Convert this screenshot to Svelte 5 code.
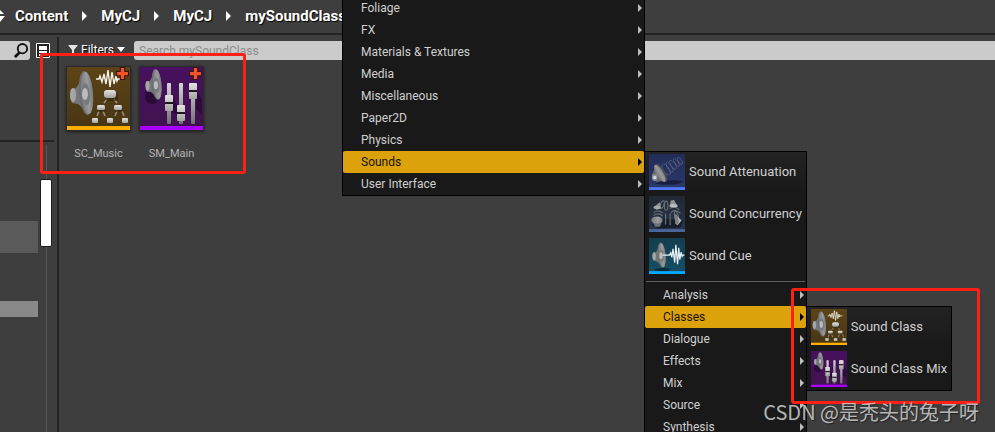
<script>
	const crumbs = ['Content', 'MyCJ', 'MyCJ', 'mySoundClass'];

	const assets = [
		{ name: 'SC_Music', icon: 'class' },
		{ name: 'SM_Main', icon: 'mix' }
	];

	const categories = [
		'Foliage',
		'FX',
		'Materials & Textures',
		'Media',
		'Miscellaneous',
		'Paper2D',
		'Physics',
		'Sounds',
		'User Interface'
	];

	const soundAssets = [
		{ name: 'Sound Attenuation', icon: 'attenuation' },
		{ name: 'Sound Concurrency', icon: 'concurrency' },
		{ name: 'Sound Cue', icon: 'cue' }
	];

	const soundGroups = ['Analysis', 'Classes', 'Dialogue', 'Effects', 'Mix', 'Source', 'Synthesis'];

	const classAssets = [
		{ name: 'Sound Class', icon: 'class' },
		{ name: 'Sound Class Mix', icon: 'mix' }
	];

	let openCategory = $state('Sounds');
	let openGroup = $state('Classes');
	let query = $state('');
</script>

{#snippet arrow()}
	<svg class="arrow" viewBox="0 0 5 10" aria-hidden="true"><path d="M0 0 5 5 0 10z" /></svg>
{/snippet}

{#snippet speaker()}
	<path d="M3 18 8 17 17 3 20 42 10 33 4 32Q1 25 3 18z" fill="#74767a" />
	<ellipse cx="5" cy="24" rx="3" ry="7" fill="#a4a6a9" />
	<ellipse cx="18" cy="22" rx="7" ry="22" fill="#6c6e71" transform="rotate(-5 18 22)" />
	<ellipse cx="19" cy="22" rx="6" ry="21" fill="url(#metal)" transform="rotate(-5 19 22)" />
	<ellipse cx="18" cy="23" rx="4" ry="11" fill="#77797c" transform="rotate(-5 18 23)" />
	<ellipse cx="17" cy="23" rx="3" ry="6" fill="#b9bbbd" />
{/snippet}

{#snippet assetIcon(kind)}
	<svg class="asset-icon" viewBox="0 0 63 63" aria-hidden="true">
		{#if kind === 'class'}
			<rect width="63" height="63" fill="url(#gold)" />
			<g transform="translate(1 4)">{@render speaker()}</g>
			<path
				d="M29 12h3l1-3 2 6 2-8 2 10 2-14 2 17 2-15 2 12 2-8 1 5 1-2h4"
				fill="none"
				stroke="#f4f1e8"
				stroke-width="1.4"
			/>
			<path
				d="m40 32-3 4m10-4 3 4M32 44l-2 5m6-5 2 5m12-5-2 5m7-5 2 5"
				stroke="#9b917c"
				stroke-width="1.5"
			/>
			<g fill="#30250e" opacity=".6">
				<rect x="38" y="26" width="13" height="8" rx="3" />
				<rect x="30" y="40" width="9" height="5" rx="2" />
				<rect x="47" y="40" width="9" height="5" rx="2" />
			</g>
			<g fill="url(#knob)">
				<rect x="37" y="23" width="12" height="8" rx="3" />
				<rect x="30" y="38" width="8" height="5" rx="1.5" />
				<rect x="47" y="38" width="8" height="5" rx="1.5" />
				<rect x="25" y="51" width="6" height="5" rx="1" />
				<rect x="40" y="51" width="6" height="5" rx="1" />
				<rect x="55" y="51" width="6" height="5" rx="1" />
			</g>
			<rect y="59" width="63" height="4" fill="#ffae00" />
		{:else if kind === 'mix'}
			<rect width="63" height="63" fill="url(#violet)" />
			<ellipse cx="12" cy="29" rx="7" ry="8" fill="#20082c" opacity=".7" />
			<g transform="translate(4 2) scale(.7)">{@render speaker()}</g>
			<path d="m33 31 4 7v10l-5-3zM57 24l5 9v15l-6-6z" fill="#20082c" opacity=".6" />
			<g fill="url(#rail)">
				<rect x="27" y="16" width="4" height="41" rx="1" />
				<rect x="39" y="16" width="4" height="41" rx="1" />
				<rect x="51" y="16" width="4" height="41" rx="1" />
			</g>
			{#each [[25, 28], [37, 38], [49, 16]] as [x, y]}
				<rect {x} {y} width="8" height="16" rx="1" fill="url(#knob)" />
				<rect {x} y={y + 7} width="8" height="2" fill="#20171f" />
			{/each}
			<rect y="59" width="63" height="4" fill="#aa00ff" />
		{:else if kind === 'attenuation'}
			<rect width="63" height="63" fill="url(#navy)" />
			<path d="M10 52Q34 42 61 48 45 57 10 52z" fill="#11162e" opacity=".7" />
			<g fill="none" stroke="#78809d" stroke-width="1" stroke-dasharray="3 1">
				<ellipse cx="30" cy="27" rx="5" ry="11" transform="rotate(-32 30 27)" />
				<ellipse cx="36" cy="23" rx="4" ry="10" transform="rotate(-32 36 23)" />
				<ellipse cx="42" cy="19" rx="4" ry="9" transform="rotate(-32 42 19)" />
				<ellipse cx="48" cy="15" rx="3" ry="8" transform="rotate(-32 48 15)" />
				<ellipse cx="54" cy="12" rx="3" ry="7" transform="rotate(-32 54 12)" />
			</g>
			<path d="m5 37 8-19 18 27-18 4z" fill="#66686d" />
			<ellipse cx="21" cy="33" rx="7" ry="18" fill="#4c4e53" transform="rotate(-31 21 33)" />
			<ellipse cx="19" cy="34" rx="6" ry="17" fill="url(#metal)" transform="rotate(-31 19 34)" />
			<ellipse cx="10" cy="41" rx="5" ry="6" fill="#8f9092" />
			<circle cx="10" cy="41" r="3" fill="#d7d7d6" />
			<rect y="58" width="63" height="5" fill="#4f78f4" />
		{:else if kind === 'concurrency'}
			<rect width="63" height="63" fill="url(#slate)" />
			<path d="M5 50 24 39 60 43 55 55 15 57z" fill="#11151d" opacity=".7" />
			<g fill="none" stroke="#687078" stroke-width="2">
				<ellipse cx="23" cy="15" rx="3" ry="7" transform="rotate(20 23 15)" />
				<ellipse cx="30" cy="17" rx="3" ry="8" />
				<path d="M8 29q9-6 16 1M8 34q9-6 16 1M36 22q9-6 17 2M38 29q8-7 17 1M29 31v19m8-20v21" />
				<ellipse cx="48" cy="35" rx="3" ry="8" transform="rotate(-12 48 35)" />
			</g>
			<path d="m10 18 9-7 2 11-8 2zM38 8l6-1 6 12H36z" fill="#8f9496" />
			<ellipse cx="14" cy="20" rx="6" ry="3" fill="#a5a9aa" />
			<ellipse cx="43" cy="17" rx="7" ry="3" fill="#babdbd" />
			<path d="m5 43 19-1-5 12H11z" fill="#6d7275" />
			<ellipse cx="14" cy="42" rx="10" ry="6" fill="url(#metal)" />
			<path d="m46 32 11 11-7 8-4-3z" fill="#b0b3b3" />
			<ellipse cx="48" cy="41" rx="3" ry="9" fill="#797e81" transform="rotate(-12 48 41)" />
			<rect y="58" width="63" height="5" fill="#49669a" />
		{:else}
			<rect width="63" height="63" fill="url(#teal)" />
			<path d="M8 55Q25 50 39 55 24 62 8 55z" fill="#071f28" opacity=".7" />
			<g transform="translate(4 8)">{@render speaker()}</g>
			<path
				d="M24 30h12l2-4 2 8 2-15 3 24 2-31 3 34 2-29 2 21 2-13 2 7 1-2h3"
				fill="none"
				stroke="#e5f2f4"
				stroke-width="2.2"
			/>
			<rect y="58" width="63" height="5" fill="#00a8ff" />
		{/if}
	</svg>
{/snippet}

<svg class="defs" aria-hidden="true">
	<defs>
		<linearGradient id="metal" x2="1">
			<stop offset="0" stop-color="#77797c" />
			<stop offset=".6" stop-color="#999b9d" />
			<stop offset="1" stop-color="#77787a" />
		</linearGradient>
		<linearGradient id="knob" x2="0" y2="1">
			<stop offset="0" stop-color="#e4e4e2" />
			<stop offset="1" stop-color="#a2a2a1" />
		</linearGradient>
		<linearGradient id="rail" x2="0" y2="1">
			<stop offset="0" stop-color="#d6d6d6" />
			<stop offset="1" stop-color="#727074" />
		</linearGradient>
		<linearGradient id="gold" x2="0" y2="1">
			<stop offset="0" stop-color="#5d4417" />
			<stop offset="1" stop-color="#473514" />
		</linearGradient>
		<linearGradient id="violet" x2="0" y2="1">
			<stop offset="0" stop-color="#48105f" />
			<stop offset="1" stop-color="#40124f" />
		</linearGradient>
		<linearGradient id="navy" x2="0" y2="1">
			<stop offset="0" stop-color="#222c57" />
			<stop offset="1" stop-color="#2a396c" />
		</linearGradient>
		<linearGradient id="slate" x2="0" y2="1">
			<stop offset="0" stop-color="#222833" />
			<stop offset="1" stop-color="#29364d" />
		</linearGradient>
		<linearGradient id="teal" x2="0" y2="1">
			<stop offset="0" stop-color="#143d4d" />
			<stop offset="1" stop-color="#155068" />
		</linearGradient>
	</defs>
</svg>

<main class="browser">
	<nav class="crumbs" aria-label="Path">
		<svg class="history" viewBox="0 0 5 12" aria-hidden="true">
			<path d="M0 0 4 4H0zM0 6h5L0 12z" fill="#fff" />
		</svg>
		{#each crumbs as crumb, i}
			{#if i > 0}{@render arrow()}{/if}
			<a href="#path-{i}">{crumb}</a>
		{/each}
	</nav>

	<div class="panels">
		<aside class="sources">
			<div class="source-bar">
				<button class="find" aria-label="Search folders">
					<svg viewBox="0 0 16 16" aria-hidden="true">
						<circle cx="9" cy="6" r="5" fill="none" stroke="#111" stroke-width="2" />
						<path d="M6 10 1 15" stroke="#111" stroke-width="3" />
					</svg>
				</button>
				<button class="collections" aria-label="Show collections">
					<svg viewBox="0 0 14 15" aria-hidden="true">
						<path d="M.5.5h13v14H.5z" fill="#222" stroke="#fff" />
						<path d="M3 3h8v4H3zM3 8h8v2H3zM3 11h8v2H3z" fill="#fff" />
					</svg>
				</button>
			</div>
			<div class="tree">
				<div class="rows">
					<div class="row hovered"></div>
					<div class="row selected"></div>
				</div>
				<div class="track"><div class="thumb"></div></div>
			</div>
		</aside>

		<section class="content">
			<div class="toolbar">
				<button class="filters">
					<svg viewBox="0 0 10 10" aria-hidden="true"><path d="M0 0h10L6 5v5L4 8V5z" /></svg>
					<span>Filters</span>
					<svg class="caret" viewBox="0 0 8 5" aria-hidden="true"><path d="M0 0h8L4 5z" /></svg>
				</button>
				<input
					type="text"
					aria-label="Search assets"
					placeholder="Search mySoundClass"
					bind:value={query}
				/>
			</div>
			<div class="assets">
				{#each assets as asset}
					<button class="tile">
						<span class="thumbnail">
							{@render assetIcon(asset.icon)}
							<svg class="dirty" viewBox="0 0 12 12" aria-hidden="true">
								<path d="M4 .5h4V4h3.500v4H8v3.500H4V8H.5V4H4z" fill="#f3542b" stroke="#41150c" />
							</svg>
						</span>
						<span>{asset.name}</span>
					</button>
				{/each}
			</div>
		</section>
	</div>

	<ul class="menu main-menu">
		{#each categories as category}
			<li>
				<button
					class="item"
					class:open={category === openCategory}
					onclick={() => (openCategory = category)}
				>
					{category}
					{@render arrow()}
				</button>
				{#if category === 'Sounds' && openCategory === 'Sounds'}
					<ul class="menu submenu">
						{#each soundAssets as asset}
							<li><button class="asset">{@render assetIcon(asset.icon)}{asset.name}</button></li>
						{/each}
						<li class="divider" role="separator"></li>
						{#each soundGroups as group}
							<li>
								<button
									class="item"
									class:open={group === openGroup}
									onclick={() => (openGroup = group)}
								>
									{group}
									{@render arrow()}
								</button>
								{#if group === 'Classes' && openGroup === 'Classes'}
									<ul class="menu submenu">
										{#each classAssets as asset}
											<li>
												<button class="asset">{@render assetIcon(asset.icon)}{asset.name}</button>
											</li>
										{/each}
									</ul>
								{/if}
							</li>
						{/each}
					</ul>
				{/if}
			</li>
		{/each}
	</ul>

	<div class="mark mark-assets"></div>
	<div class="mark mark-classes"></div>
	<div class="watermark">CSDN @是秃头的兔子呀</div>
</main>

<style>
	:global(body) {
		background: #3e3e3e;
	}

	.browser {
		position: relative;
		display: flex;
		flex-direction: column;
		height: 100vh;
		overflow: hidden;
		background: #3e3e3e;
		color: #d0d0d0;
		font-family: Roboto, 'Noto Sans', sans-serif;
		font-size: 13px;
	}

	.browser * {
		box-sizing: border-box;
	}

	.defs {
		position: absolute;
		width: 0;
		height: 0;
	}

	button {
		display: flex;
		align-items: center;
		padding: 0;
		border: 0;
		background: none;
		color: inherit;
		font: inherit;
		text-align: left;
	}

	svg {
		display: block;
		flex: none;
	}

	.arrow {
		width: 5px;
		height: 10px;
		fill: currentColor;
	}

	.crumbs {
		display: flex;
		align-items: center;
		flex: none;
		height: 35px;
		padding-bottom: 2px;
		border-bottom: 2px solid #232323;
		color: #fff;
		font-size: 15px;
		font-weight: 700;
		text-shadow: 1px 1px 1px #000;
	}

	.crumbs a {
		color: inherit;
		text-decoration: none;
	}

	.crumbs .arrow {
		margin: 0 14px;
	}

	.history {
		width: 5px;
		height: 12px;
		margin-right: 10px;
	}

	.panels {
		display: flex;
		flex: 1;
		min-height: 0;
		padding-top: 2px;
	}

	.sources {
		display: flex;
		flex-direction: column;
		width: 59px;
		border-right: 2px solid #232323;
	}

	.source-bar {
		display: flex;
		align-items: flex-start;
		gap: 6px;
		height: 105px;
		margin-right: 3px;
		padding-top: 4px;
		border-bottom: 2px solid #232323;
	}

	.find {
		justify-content: flex-end;
		width: 30px;
		height: 19px;
		padding-right: 1px;
		border-radius: 0 3px 3px 0;
		background: #cbcbcb;
	}

	.find svg {
		width: 15px;
		height: 15px;
	}

	.collections svg {
		width: 14px;
		height: 15px;
		margin-top: 2px;
	}

	.tree {
		display: flex;
		flex: 1;
		gap: 2px;
		padding-top: 3px;
	}

	.rows {
		display: flex;
		flex-direction: column;
		gap: 48px;
		width: 38px;
		padding-top: 76px;
	}

	.row.hovered {
		height: 32px;
		background: #5a5a5a;
	}

	.row.selected {
		height: 16px;
		background: #898989;
	}

	.track {
		width: 12px;
		padding-top: 34px;
		background: linear-gradient(#565656, #565656) center / 1px 100% no-repeat;
	}

	.thumb {
		height: 68px;
		border: 1px solid #1c1c1c;
		border-radius: 2px;
		background: #fff;
	}

	.content {
		flex: 1;
		min-width: 0;
	}

	.toolbar {
		display: flex;
		align-items: center;
		gap: 8px;
		padding: 4px 0 0 9px;
	}

	.filters {
		gap: 3px;
		width: 58px;
		padding-bottom: 2px;
		color: #fff;
		font-size: 12px;
		text-shadow: 1px 1px 1px #000;
	}

	.filters svg {
		width: 10px;
		height: 10px;
		fill: #e4e4e4;
	}

	.filters .caret {
		width: 8px;
		height: 5px;
		fill: #fff;
	}

	input {
		flex: 1;
		min-width: 0;
		height: 19px;
		padding: 0 5px;
		border: 0;
		border-radius: 3px 0 0 3px;
		background: #cbcbcb;
		color: #222;
		font: inherit;
		font-size: 12px;
	}

	input::placeholder {
		color: #8c8c8c;
		opacity: 1;
	}

	.assets {
		display: flex;
		gap: 8px;
		padding: 6px 7px 0;
	}

	.tile {
		flex-direction: column;
		gap: 16px;
		width: 65px;
		color: #b5b5b5;
		font-size: 11px;
	}

	.thumbnail {
		position: relative;
		padding: 1px;
		border-radius: 1px;
		background: #2b2b2b;
		box-shadow: 0 1px 3px #1c1c1c;
	}

	.thumbnail .asset-icon {
		width: 63px;
		height: 63px;
	}

	.dirty {
		position: absolute;
		top: 1px;
		right: 2px;
		width: 13px;
		height: 13px;
	}

	.menu {
		position: absolute;
		margin: 0;
		padding: 0;
		border: 1px solid #000;
		background: #191919;
		list-style: none;
	}

	.menu li {
		position: relative;
	}

	.main-menu {
		top: -4px;
		left: 342px;
		width: 303px;
	}

	.submenu {
		top: 0;
		left: 100%;
		width: max-content;
		background: linear-gradient(#232323, #191919 40px);
	}

	.item {
		justify-content: space-between;
		width: 100%;
		height: 22px;
		padding: 0 2px 0 18px;
		border-radius: 2px;
		font-size: 12px;
	}

	.item .arrow {
		width: 4px;
		fill: #bdbdbd;
	}

	.item.open {
		background: #dca20b;
		color: #191204;
	}

	.item.open .arrow {
		fill: #000;
	}

	.asset {
		gap: 4px;
		width: 100%;
		height: 42px;
		padding: 0 4px 2px;
		line-height: 14px;
		white-space: nowrap;
	}

	.submenu li:last-child .asset {
		height: 41px;
	}

	.asset .asset-icon {
		width: 36px;
		height: 36px;
	}

	.divider {
		height: 1px;
		margin: 3px 1px 2px;
		background: #5e5e5e;
	}

	.mark {
		position: absolute;
		border: 3px solid #ff2015;
		border-radius: 3px;
		pointer-events: none;
	}

	.mark-assets {
		top: 53px;
		left: 40px;
		width: 206px;
		height: 121px;
	}

	.mark-classes {
		top: 288px;
		left: 791px;
		width: 189px;
		height: 116px;
	}

	.watermark {
		position: absolute;
		right: 16px;
		bottom: 5px;
		color: rgba(220, 220, 220, 0.8);
		font-family: 'Noto Sans CJK SC', sans-serif;
		font-size: 20px;
		line-height: 30px;
		text-shadow: 1px 1px 1px #222;
		white-space: nowrap;
	}
</style>
